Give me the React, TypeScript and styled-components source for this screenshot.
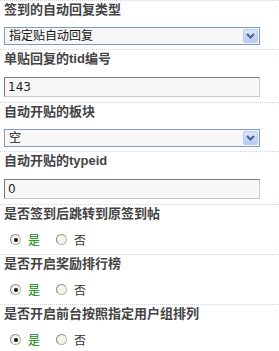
import React from 'react';
import styled, { createGlobalStyle } from 'styled-components';

const GlobalStyle = createGlobalStyle`
    body {
        margin: 0;
        background: #fff;
        font-family: "Liberation Sans", "Noto Sans CJK SC", sans-serif;
    }
`;

type Field =
    | { kind: 'select'; title: string; value: string }
    | { kind: 'input'; title: string; value: string }
    | { kind: 'radio'; title: string; yes: boolean };

const fields: Field[] = [
    { kind: 'select', title: '签到的自动回复类型', value: '指定贴自动回复' },
    { kind: 'input', title: '单贴回复的tid编号', value: '143' },
    { kind: 'select', title: '自动开贴的板块', value: '空' },
    { kind: 'input', title: '自动开贴的typeid', value: '0' },
    { kind: 'radio', title: '是否签到后跳转到原签到帖', yes: true },
    { kind: 'radio', title: '是否开启奖励排行榜', yes: true },
    { kind: 'radio', title: '是否开启前台按照指定用户组排列', yes: true },
];

const ChevronDown: React.FC = () => (
    <svg width="9" height="6" viewBox="0 0 9 6">
        <path d="M1 1 L4.5 4.5 L8 1" fill="none" stroke="#4d6185" strokeWidth="2" />
    </svg>
);

const App: React.FC = () => {
    return (
        <>
            <GlobalStyle />
            <Form>
                {fields.map((f) => (
                    <Section key={f.title} kind={f.kind}>
                        <Title>{f.title}</Title>
                        {f.kind === 'select' && (
                            <SelectBox>
                                <SelectValue>{f.value}</SelectValue>
                                <ArrowBtn>
                                    <ChevronDown />
                                </ArrowBtn>
                            </SelectBox>
                        )}
                        {f.kind === 'input' && <TextInput defaultValue={f.value} readOnly />}
                        {f.kind === 'radio' && (
                            <RadioRow>
                                <RadioItem>
                                    <RadioDot checked={f.yes} />
                                    <RadioLabel yes>是</RadioLabel>
                                </RadioItem>
                                <RadioItem>
                                    <RadioDot checked={!f.yes} />
                                    <RadioLabel>否</RadioLabel>
                                </RadioItem>
                            </RadioRow>
                        )}
                    </Section>
                ))}
            </Form>
        </>
    );
};

export default App;

const Form = styled.div`
    width: 279px;
    display: flex;
    flex-direction: column;
`;

const Section = styled.div<{ kind: string }>`
    border-top: 1px dotted #cbd6e0;
    padding: 0 0 ${(p) => (p.kind === 'input' ? 5 : 4)}px 4px;
    display: flex;
    flex-direction: column;
`;

const Title = styled.div`
    font-size: 13px;
    font-weight: bold;
    line-height: 18px;
    color: #444;
    white-space: nowrap;
`;

const SelectBox = styled.div`
    margin-top: 8px;
    width: 256px;
    height: 18px;
    box-sizing: border-box;
    border: 1px solid #7f9db9;
    background: #f7f7f7;
    display: flex;
    align-items: center;
    justify-content: space-between;
`;

const SelectValue = styled.span`
    padding-left: 4px;
    font-size: 12px;
    color: #111;
    line-height: 16px;
`;

const ArrowBtn = styled.span`
    width: 15px;
    height: 14px;
    margin-right: 1px;
    box-sizing: border-box;
    border: 1px solid #b9cbf5;
    border-radius: 2px;
    background: linear-gradient(#dbe5fd, #b7cbf7);
    display: flex;
    align-items: center;
    justify-content: center;
`;

const TextInput = styled.input`
    margin: 9px 0 0;
    width: 256px;
    height: 20px;
    box-sizing: border-box;
    border: 1px solid;
    border-color: #7a7a7a #c9c9c9 #c9c9c9 #7a7a7a;
    background: #f7f7f7;
    padding: 0 3px;
    font-family: "DejaVu Sans", sans-serif;
    font-size: 12px;
    color: #222;
    outline: none;
`;

const RadioRow = styled.div`
    margin-top: 6px;
    height: 21px;
    padding-left: 6px;
    display: flex;
    align-items: center;
    gap: 16px;
`;

const RadioItem = styled.label`
    display: flex;
    align-items: center;
    gap: 7px;
`;

const RadioDot = styled.span<{ checked: boolean }>`
    width: 11px;
    height: 11px;
    box-sizing: border-box;
    border-radius: 50%;
    border: 1px solid #b8b8a8;
    border-top-color: #888;
    border-left-color: #888;
    background: #f4f4ee;
    display: flex;
    align-items: center;
    justify-content: center;

    &::after {
        content: '';
        width: 4px;
        height: 4px;
        border-radius: 50%;
        background: #111;
        display: ${(p) => (p.checked ? 'block' : 'none')};
    }
`;

const RadioLabel = styled.span<{ yes?: boolean }>`
    font-size: 12px;
    color: ${(p) => (p.yes ? '#080' : '#333')};
`;
